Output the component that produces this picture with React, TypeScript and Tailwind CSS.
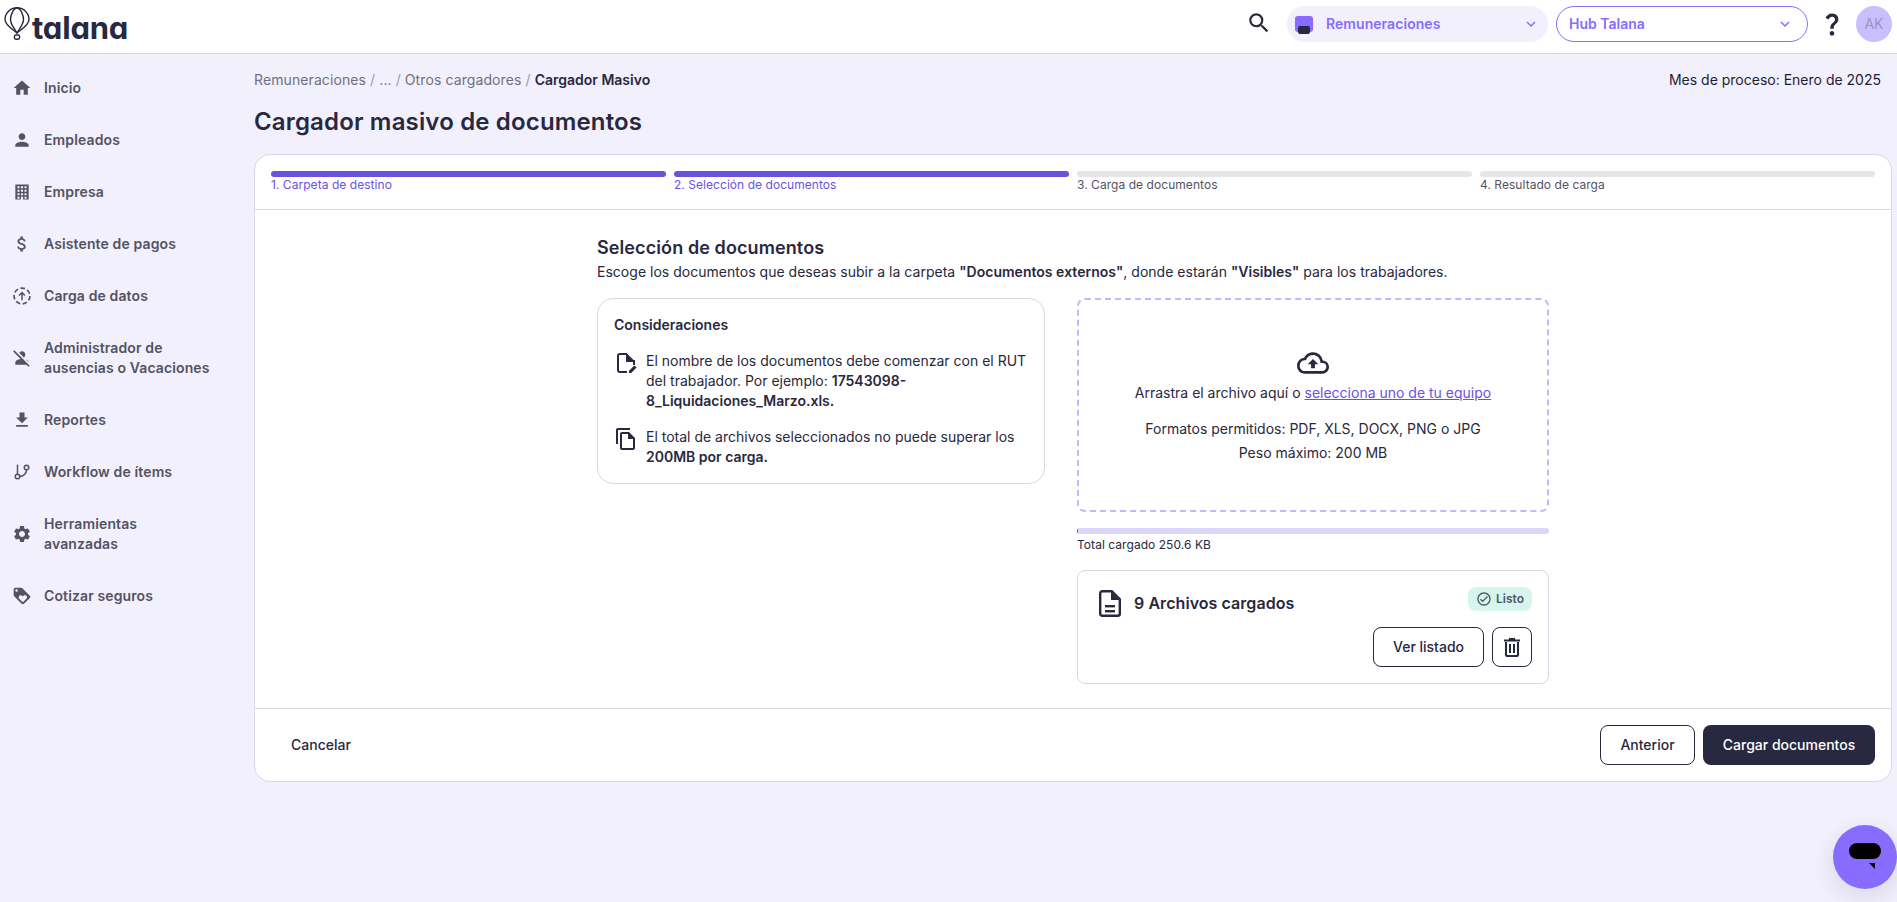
import type { ReactNode } from "react";
import { GitBranch } from "lucide-react";
import {
  MdAttachMoney,
  MdFileDownload,
  MdHome,
  MdKeyboardArrowDown,
  MdLoyalty,
  MdOutlineCheckCircle,
  MdOutlineCloudUpload,
  MdOutlineFileCopy,
  MdPerson,
  MdPersonOff,
  MdQuestionMark,
  MdSearch,
  MdSettings,
} from "react-icons/md";

function UploadDashedIcon() {
  return (
    <svg viewBox="0 0 24 24" className="h-5 w-5" fill="none" stroke="currentColor" strokeWidth="2">
      <circle cx="12" cy="12" r="9.5" strokeDasharray="5.5 3" />
      <path d="M12 17V8M8.5 11.5 12 8l3.5 3.5" strokeWidth="1.8" />
    </svg>
  );
}

function BuildingIcon() {
  return (
    <svg viewBox="0 0 24 24" className="h-5 w-5" fill="currentColor">
      <path
        fillRule="evenodd"
        d="M4 3h16v18H4ZM6.5 5v2.5H9V5Zm4.2 0v2.5h2.6V5ZM15 5v2.5h2.5V5ZM6.5 9.2v2.6H9V9.2Zm4.2 0v2.6h2.6V9.2Zm4.3 0v2.6h2.5V9.2ZM6.5 13.5V16H9v-2.5Zm4.2 0V16h2.6v-2.5Zm4.3 0V16h2.5v-2.5ZM6.5 17.7V20H9v-2.3Zm4.2 0V21h2.6v-3.3Zm4.3 0V20h2.5v-2.3Z"
      />
    </svg>
  );
}

function Logo() {
  return (
    <div className="flex h-full items-start pl-1 pt-[7px]">
      <svg viewBox="0 0 26 33" className="h-[33px] w-[26px] text-[#282840]" fill="none" stroke="currentColor" strokeWidth="1.4">
        <path d="M13 26C8 22 1 18 1 12.5a12 11.8 0 0 1 24 0C25 18 18 22 13 26Z" />
        <path d="M13 26C10 21 6.5 17 6.5 12.5S9.5 1 13 1s6.5 7 6.5 11.5S16 21 13 26Z" />
        <rect x="10.4" y="28" width="5.2" height="4.2" rx="1.6" strokeWidth="1.4" />
      </svg>
      <span className="ml-[2px] mt-1 font-['Inter'] text-[31px] font-bold leading-[34px] tracking-[-0.2px] text-[#282840] [font-feature-settings:'cv11']">
        talana
      </span>
    </div>
  );
}

function Header() {
  return (
    <header className="flex h-[54px] justify-between border-b border-[#d5d9e3] bg-white">
      <Logo />
      <div className="flex items-start pt-1.5">
        <MdSearch className="mt-[4px] h-[26px] w-[26px] text-[#282840]" />
        <div className="ml-[15px] flex h-9 w-[261px] items-center rounded-full bg-[#f2f0fd] pl-2 pr-2">
          <span className="relative h-4 w-[18px] rounded-[3px] bg-[#886cff]">
            <span className="absolute bottom-[-2px] left-[3px] h-2 w-3 rounded-[2px] bg-[#282840]" />
          </span>
          <span className="ml-[13px] text-sm font-semibold tracking-[0.06px] text-[#886cff]">Remuneraciones</span>
          <MdKeyboardArrowDown className="ml-auto h-[18px] w-[18px] text-[#886cff]" />
        </div>
        <div className="ml-2 flex h-9 w-[252px] items-center rounded-full border border-[#886cff] bg-white pl-3 pr-[13px]">
          <span className="text-sm font-semibold text-[#886cff]">Hub Talana</span>
          <MdKeyboardArrowDown className="ml-auto h-[18px] w-[18px] text-[#886cff]" />
        </div>
        <MdQuestionMark className="ml-[10px] mt-1 h-7 w-7 text-[#282840]" />
        <div className="ml-[10px] mr-[5px] flex h-9 w-9 items-center justify-center rounded-full bg-[#c9bfff] text-sm text-[#9a93bb]">
          AK
        </div>
      </div>
    </header>
  );
}

type NavItem = { label: ReactNode; icon: ReactNode };

const navItems: NavItem[] = [
  { label: "Inicio", icon: <MdHome className="h-5 w-5" /> },
  { label: "Empleados", icon: <MdPerson className="h-5 w-5" /> },
  { label: "Empresa", icon: <BuildingIcon /> },
  { label: "Asistente de pagos", icon: <MdAttachMoney className="h-5 w-5" /> },
  { label: "Carga de datos", icon: <UploadDashedIcon /> },
  {
    label: (
      <>
        Administrador de
        <br />
        ausencias o Vacaciones
      </>
    ),
    icon: <MdPersonOff className="h-5 w-5" />,
  },
  { label: "Reportes", icon: <MdFileDownload className="h-5 w-5" /> },
  { label: "Workflow de ítems", icon: <GitBranch className="h-[18px] w-[18px]" strokeWidth={2} /> },
  {
    label: (
      <>
        Herramientas
        <br />
        avanzadas
      </>
    ),
    icon: <MdSettings className="h-5 w-5" />,
  },
  { label: "Cotizar seguros", icon: <MdLoyalty className="h-5 w-5" /> },
];

function Sidebar() {
  return (
    <aside className="w-[254px] shrink-0 pt-2">
      <nav>
        {navItems.map((item, i) => (
          <a key={i} className="flex items-center gap-3 py-4 pl-3 text-sm font-semibold tracking-[0.12px] text-[#535362]">
            <span className="flex w-5 shrink-0 justify-center">{item.icon}</span>
            <span>{item.label}</span>
          </a>
        ))}
      </nav>
    </aside>
  );
}

const steps = [
  { label: "1. Carpeta de destino", done: true },
  { label: "2. Selección de documentos", done: true },
  { label: "3. Carga de documentos", done: false },
  { label: "4. Resultado de carga", done: false },
];

function Stepper() {
  return (
    <div className="grid grid-cols-4 gap-2 border-b border-[#d5d9e3] px-4 pb-4 pt-4">
      {steps.map((s) => (
        <div key={s.label}>
          <div className={s.done ? "h-1.5 rounded-full bg-[#6b52de]" : "h-1.5 rounded-full bg-[#e6e6e8]"} />
          <div className={s.done ? "text-xs tracking-[0.05px] text-[#6b52de]" : "text-xs tracking-[0.05px] text-[#535362]"}>{s.label}</div>
        </div>
      ))}
    </div>
  );
}

function DocEditIcon() {
  return (
    <svg viewBox="0 0 24 24" className="h-6 w-6 shrink-0">
      <path d="M13 3H6a2 2 0 0 0-2 2v14a2 2 0 0 0 2 2h7" fill="none" stroke="currentColor" strokeWidth="2" />
      <path d="M13 3v7h7v4" fill="none" stroke="currentColor" strokeWidth="2" />
      <path d="M13 2.5 20.5 10H13Z" fill="currentColor" />
      <path d="M15 22v-2.2l5.4-5.4 2.2 2.2-5.4 5.4Z" fill="currentColor" />
    </svg>
  );
}

function FileIcon() {
  return (
    <svg viewBox="0 0 22 27" className="h-[27px] w-[22px]" fill="currentColor">
      <path
        d="M3.2 1.2h9.6l8 8v14.6a2 2 0 0 1-2 2H3.2a2 2 0 0 1-2-2V3.2a2 2 0 0 1 2-2Z"
        fill="none"
        stroke="currentColor"
        strokeWidth="2.4"
      />
      <path d="M12 1.5 20.5 10H12Z" />
      <rect x="6" y="15" width="10" height="2.4" />
      <rect x="6" y="20" width="10" height="2.4" />
    </svg>
  );
}

function TrashIcon() {
  return (
    <svg viewBox="0 0 16 19" className="h-[19px] w-4" fill="currentColor">
      <rect x="5" y="0" width="6" height="2" />
      <rect x="0" y="1.5" width="16" height="2" />
      <path d="M2 4v13a1 1 0 0 0 1 1h10a1 1 0 0 0 1-1V4" fill="none" stroke="currentColor" strokeWidth="2" />
      <rect x="5" y="6" width="2" height="9" />
      <rect x="9" y="6" width="2" height="9" />
    </svg>
  );
}

function Considerations() {
  return (
    <div className="self-start rounded-2xl border border-[#d5d9e3] px-4 pb-4 pt-4">
      <h3 className="text-sm font-semibold">Consideraciones</h3>
      <div className="mt-4 flex gap-2">
        <DocEditIcon />
        <p className="text-sm">
          El nombre de los documentos debe comenzar con el RUT del trabajador. Por ejemplo:{" "}
          <b className="font-semibold">17543098-8_Liquidaciones_Marzo.xls.</b>
        </p>
      </div>
      <div className="mt-4 flex gap-2">
        <MdOutlineFileCopy className="h-6 w-6 shrink-0" />
        <p className="text-sm">
          El total de archivos seleccionados no puede superar los <b className="font-semibold">200MB por carga.</b>
        </p>
      </div>
    </div>
  );
}

function UploadColumn() {
  return (
    <div>
      <div className="flex h-[214px] flex-col items-center rounded-lg border-2 border-dashed border-[#c4b8fb] pt-[47px] text-sm">
        <MdOutlineCloudUpload className="h-8 w-8" />
        <p className="mt-[2px] leading-6">
          Arrastra el archivo aquí o <a className="text-[#6b52de] underline">selecciona uno de tu equipo</a>
        </p>
        <div className="mt-3 text-center leading-6">
          <p>Formatos permitidos: PDF, XLS, DOCX, PNG o JPG</p>
          <p>Peso máximo: 200 MB</p>
        </div>
      </div>
      <div className="mt-4 h-1.5 overflow-hidden rounded-full bg-[#dcd6fb]">
        <div className="h-full w-px bg-[#6b52de]" />
      </div>
      <p className="mt-[3px] text-xs tracking-[0.05px]">Total cargado 250.6 KB</p>
      <div className="mt-[17px] rounded-lg border border-[#d5d9e3] p-4">
        <div className="flex items-start justify-between">
          <div className="ml-[5px] flex h-8 items-center gap-[13px]">
            <FileIcon />
            <span className="text-base font-semibold tracking-[0.06px]">9 Archivos cargados</span>
          </div>
          <span className="flex h-6 w-16 items-center justify-center gap-1 rounded-lg bg-[#d6f5ee] text-xs font-semibold text-[#535362]">
            <MdOutlineCheckCircle className="h-4 w-4" />
            Listo
          </span>
        </div>
        <div className="mt-2 flex justify-end gap-2">
          <button className="h-10 w-[111px] rounded-lg border border-[#282840] text-sm font-medium">Ver listado</button>
          <button className="flex h-10 w-10 items-center justify-center rounded-lg border border-[#282840]">
            <TrashIcon />
          </button>
        </div>
      </div>
    </div>
  );
}

function ChatBubble() {
  return (
    <div className="fixed bottom-[13px] right-0 flex h-16 w-16 items-center justify-center rounded-full bg-[#886cff] shadow-[0_8px_24px_rgba(40,40,64,0.12)]">
      <svg viewBox="0 0 32 28" className="h-7 w-8">
        <rect x="0" y="0" width="32" height="16" rx="8" fill="#000" />
        <path d="M20 20h6v6Z" fill="#000" />
      </svg>
    </div>
  );
}

function Breadcrumb() {
  const crumbs = ["Remuneraciones", "...", "Otros cargadores"];
  return (
    <div className="flex items-center gap-1 tracking-[0.1px] text-[#6f7180]">
      {crumbs.map((c) => (
        <span key={c} className="flex gap-1">
          <span>{c}</span>
          <span className="text-[#9a9aa8]">/</span>
        </span>
      ))}
      <b className="font-semibold tracking-normal text-[#282840]">Cargador Masivo</b>
    </div>
  );
}

export default function App() {
  return (
    <div className="h-screen overflow-hidden bg-[#f2f0fd] font-['Inter',sans-serif] text-[#282840]">
      <Header />
      <div className="flex">
        <Sidebar />
        <main className="min-w-0 flex-1 pr-[5px] pt-4">
          <div className="flex h-5 items-center justify-between text-sm">
            <Breadcrumb />
            <div className="mr-[11px] text-[#1e1e32]">Mes de proceso: Enero de 2025</div>
          </div>
          <h1 className="mt-4 text-2xl font-semibold tracking-[0.16px]">Cargador masivo de documentos</h1>
          <section className="mt-4 rounded-2xl border border-[#d5d9e3] bg-white">
            <Stepper />
            <div className="mx-auto w-[952px] pb-6 pt-6">
              <h2 className="text-lg font-semibold tracking-[0.1px]">Selección de documentos</h2>
              <p className="text-sm tracking-[0.02px]">
                Escoge los documentos que deseas subir a la carpeta <b className="font-semibold">"Documentos externos"</b>,
                donde estarán <b className="font-semibold">"Visibles"</b> para los trabajadores.
              </p>
              <div className="mt-4 grid grid-cols-[448px_472px] gap-8">
                <Considerations />
                <UploadColumn />
              </div>
            </div>
            <div className="flex items-center justify-between border-t border-[#d5d9e3] p-4">
              <button className="h-10 px-5 text-sm font-medium">Cancelar</button>
              <div className="flex gap-2">
                <button className="h-10 w-[95px] rounded-lg border border-[#282840] text-sm font-medium">Anterior</button>
                <button className="h-10 w-[172px] rounded-lg bg-[#282840] text-sm font-medium text-white">Cargar documentos</button>
              </div>
            </div>
          </section>
        </main>
      </div>
      <ChatBubble />
    </div>
  );
}
